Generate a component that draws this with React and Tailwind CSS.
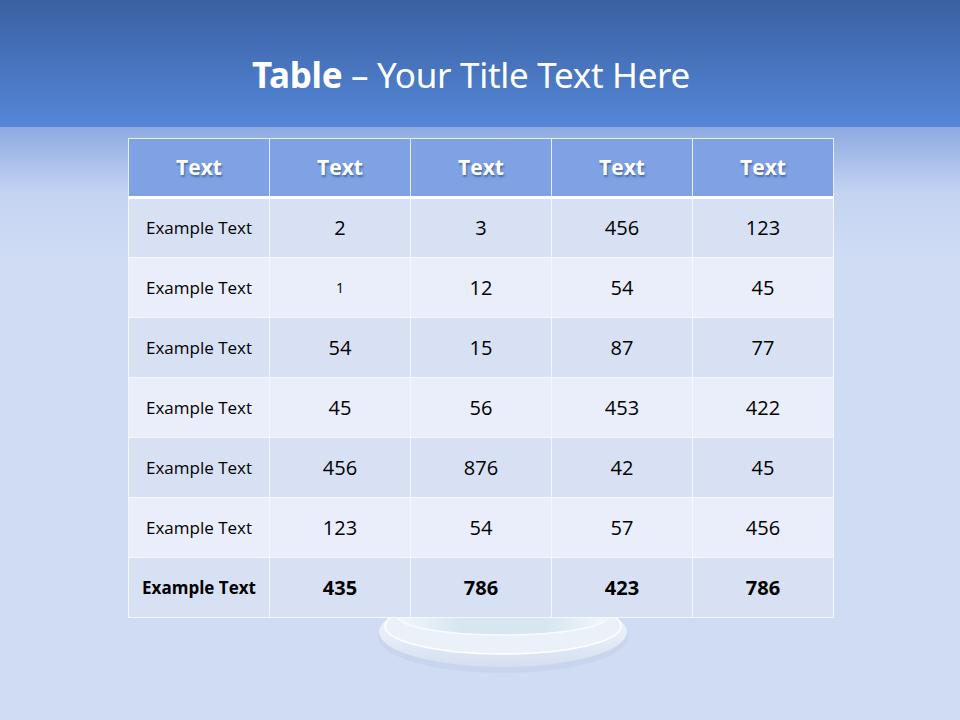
import React from "react";

const rows = [
  ["2", "3", "456", "123"],
  ["1", "12", "54", "45"],
  ["54", "15", "87", "77"],
  ["45", "56", "453", "422"],
  ["456", "876", "42", "45"],
  ["123", "54", "57", "456"],
  ["435", "786", "423", "786"],
];

function Pedestal() {
  return (
    <svg width="260" height="70" viewBox="0 0 260 70" className="absolute left-[373px] top-[606px]">
      <defs>
        <linearGradient id="ped" x1="0" y1="0" x2="0" y2="1">
          <stop offset="0" stopColor="#f4f8fc" />
          <stop offset="0.6" stopColor="#e4edf6" />
          <stop offset="1" stopColor="#d3def0" />
        </linearGradient>
        <linearGradient id="top" x1="0" y1="0" x2="1" y2="0">
          <stop offset="0" stopColor="#f2f7fb" />
          <stop offset="0.3" stopColor="#d7e6f0" />
          <stop offset="0.7" stopColor="#d7e6f0" />
          <stop offset="1" stopColor="#f2f7fb" />
        </linearGradient>
      </defs>
      <ellipse cx="130" cy="31" rx="125" ry="36" fill="#c6d3ea" opacity="0.8" />
      <ellipse cx="130" cy="26" rx="124" ry="35" fill="url(#ped)" />
      <ellipse cx="130" cy="20" rx="118" ry="28" fill="#eaf1f8" stroke="#ffffff" strokeWidth="1.5" />
      <ellipse cx="130" cy="10" rx="106" ry="19" fill="url(#top)" stroke="#f8fbfd" strokeWidth="1.5" />
    </svg>
  );
}

export default function App() {
  return (
    <div
      className="relative w-[960px] h-[720px] overflow-hidden"
      style={{ fontFamily: '"Open Sans", "Noto Sans", sans-serif' }}
    >
      {/* backdrop */}
      <div className="absolute inset-0 flex flex-col">
        <div className="h-[127px] bg-gradient-to-b from-[#3a61a2] to-[#5587d8]" />
        <div className="h-[130px] bg-gradient-to-b from-[#8eaae2] via-[#c3d3f1] via-50% to-[#d0dcf4]" />
        <div className="flex-1 bg-[#d0dcf4]" />
      </div>
      <Pedestal />

      <div className="relative flex flex-col items-center">
        <h1
          className="mt-[52px] h-[46px] ml-[-18px] text-[35px] leading-[46px] text-white tracking-[-0.3px]"
          style={{ fontFamily: '"Noto Sans", sans-serif' }}
        >
          <span className="font-bold">Table</span> – Your Title Text Here
        </h1>
        <table className="mt-[40px] ml-[2px] border-collapse table-fixed w-[705px]">
          <thead>
            <tr className="h-[59px] bg-[#7ea2e3]">
              {[0, 1, 2, 3, 4].map((i) => (
                <th
                  key={i}
                  className="w-[141px] border border-[#e6eefa] border-b-[3px] border-b-white text-[21px] font-bold text-white"
                  style={{ textShadow: "1px 2px 2px rgba(40,60,100,0.55)" }}
                >
                  Text
                </th>
              ))}
            </tr>
          </thead>
          <tbody>
            {rows.map((r, ri) => {
              const last = ri === rows.length - 1;
              return (
                <tr key={ri} className={`h-[60px] ${ri % 2 === 0 ? "bg-[#d8e0f4]" : "bg-[#e9eefa]"}`}>
                  <td className={`border border-[#f4f7fd] text-center text-[17px] text-black ${last ? "font-bold" : ""}`}>
                    Example Text
                  </td>
                  {r.map((v, ci) => (
                    <td
                      key={ci}
                      className={`border border-[#f4f7fd] text-center text-black ${
                        ri === 1 && ci === 0 ? "text-[14px]" : "text-[20px]"
                      } ${last ? "font-bold" : ""}`}
                    >
                      {v}
                    </td>
                  ))}
                </tr>
              );
            })}
          </tbody>
        </table>
      </div>
    </div>
  );
}
